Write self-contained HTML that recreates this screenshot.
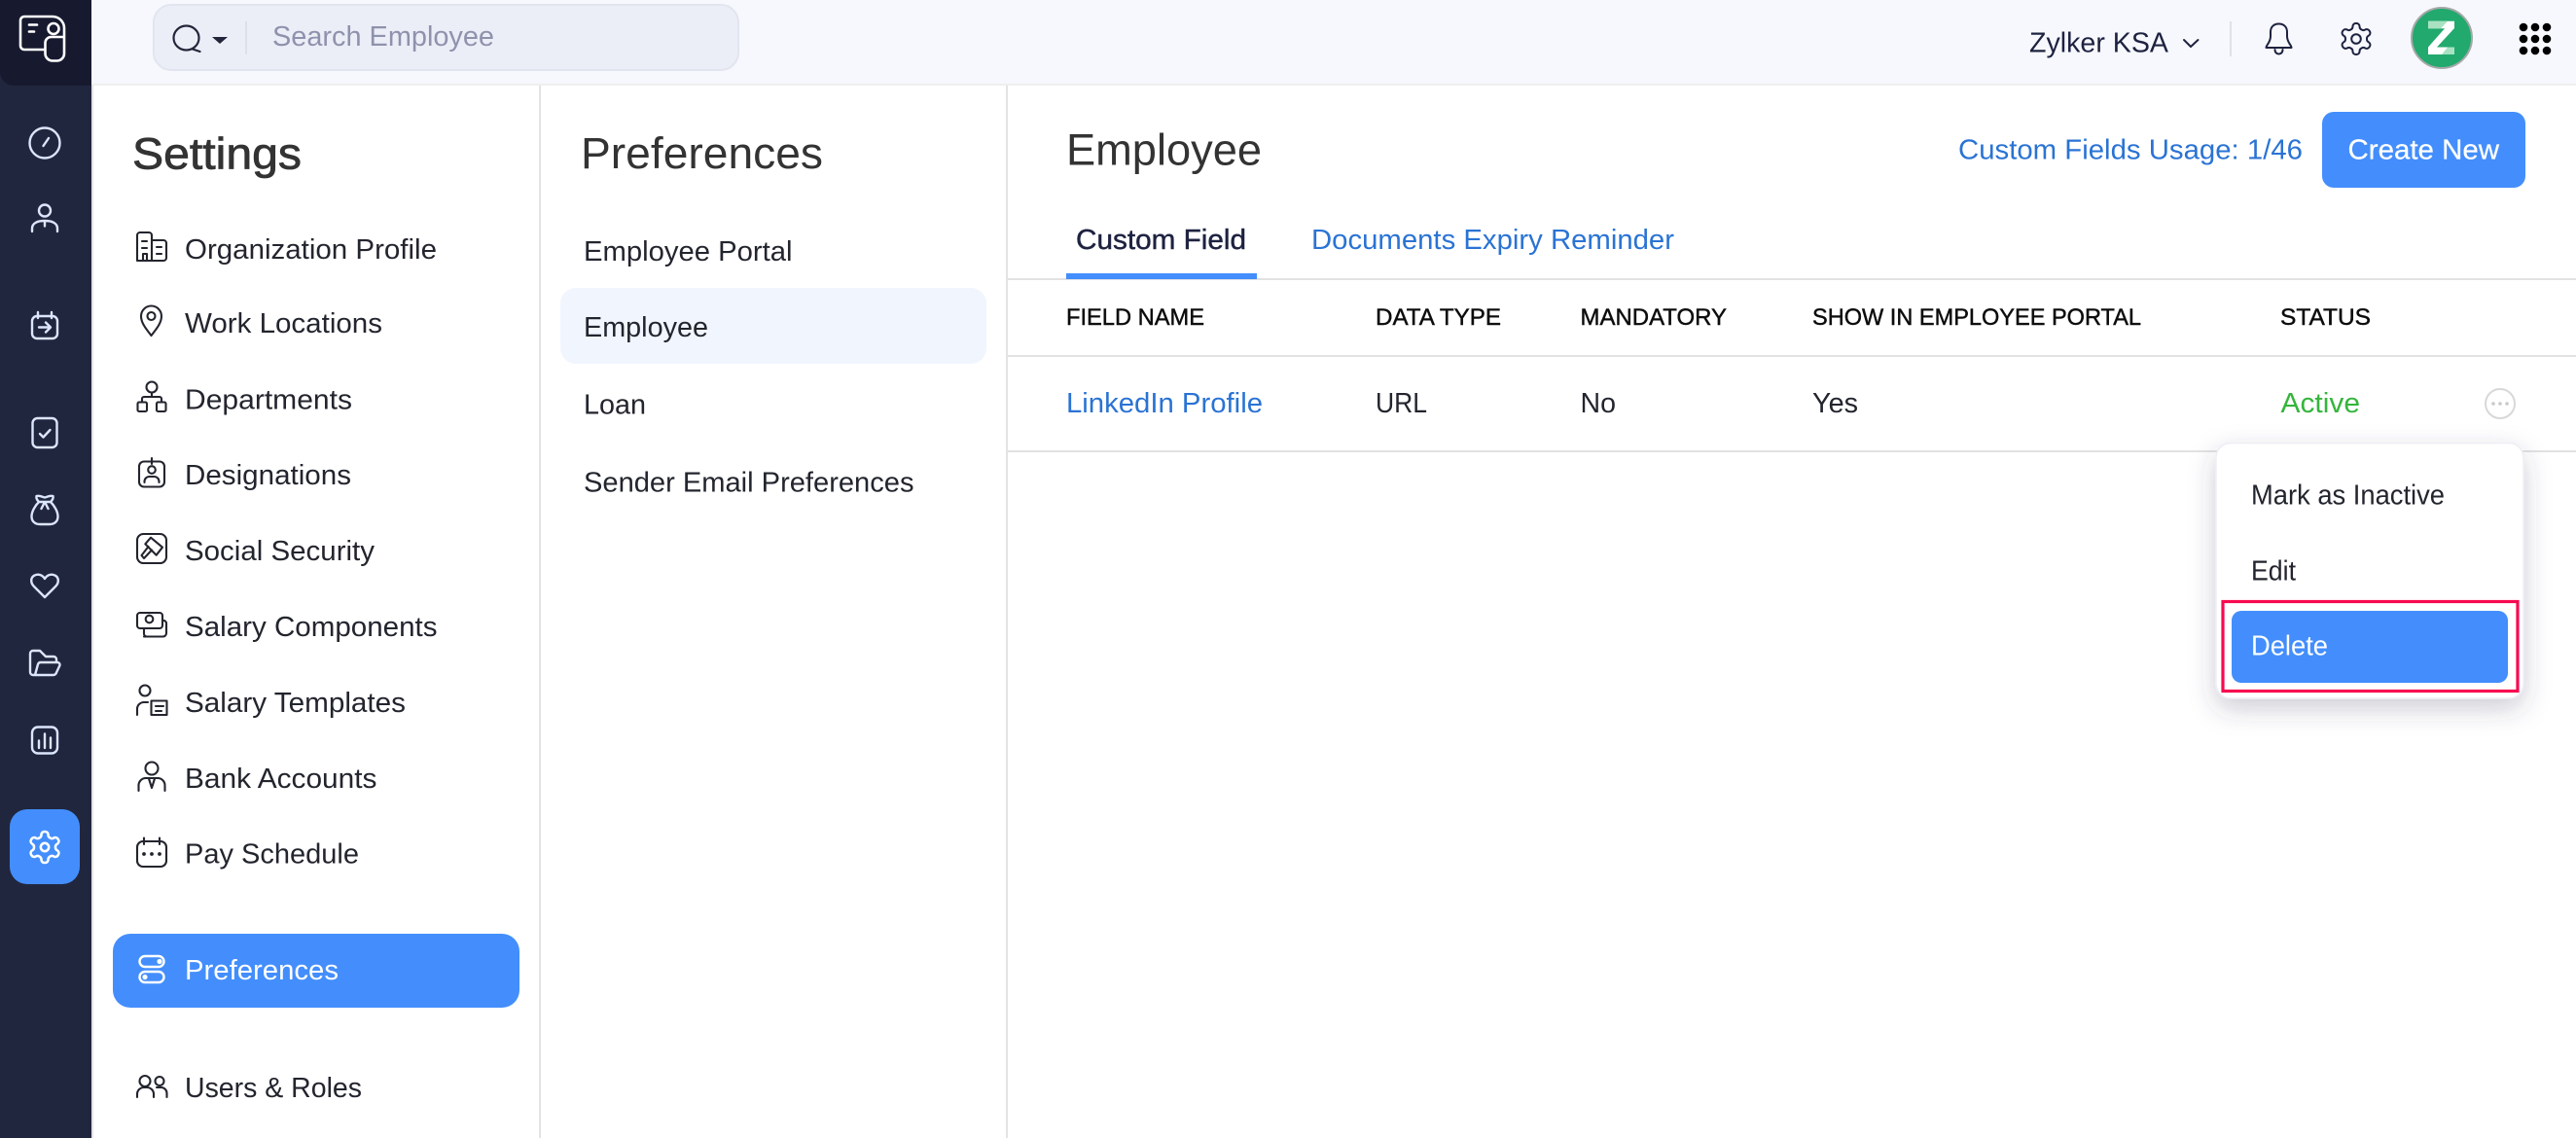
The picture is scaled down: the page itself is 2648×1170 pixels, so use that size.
<!DOCTYPE html>
<html lang="en">
<head>
<meta charset="utf-8">
<title>Settings - Preferences - Employee</title>
<style>
html,body{margin:0;padding:0;background:#fff;width:2648px;height:1170px;overflow:hidden}
svg{display:block}
text{font-family:"Liberation Sans",Arial,sans-serif;font-size:28.5px;fill:#23252e;white-space:pre}
.h{font-size:45px;fill:#333}
.med{stroke-width:.45px;paint-order:stroke}
.hm{stroke:#333;stroke-width:.75px}
.th{font-size:24.5px;fill:#0c0c0c;stroke:#0c0c0c}
.r{fill:none;stroke:#dbe5fb;stroke-width:2.4;stroke-linecap:round;stroke-linejoin:round}
.i{fill:none;stroke:#23252e;stroke-width:2.1;stroke-linecap:round;stroke-linejoin:round}
.wi{fill:none;stroke:#fff;stroke-width:2.4;stroke-linecap:round;stroke-linejoin:round}
</style>
</head>
<body>
<svg xmlns="http://www.w3.org/2000/svg" width="2648" height="1170" viewBox="0 0 2648 1170">
<defs>
<filter id="sh" x="-20%" y="-20%" width="140%" height="150%"><feDropShadow dx="0" dy="10" stdDeviation="13" flood-color="#3a3f5c" flood-opacity=".25"/></filter>
<path id="gear" d="M12.22 2h-.44a2 2 0 0 0-2 2v.18a2 2 0 0 1-1 1.730l-.43.25a2 2 0 0 1-2 0l-.15-.08a2 2 0 0 0-2.730.73l-.22.38a2 2 0 0 0 .73 2.730l.15.1a2 2 0 0 1 1 1.720v.51a2 2 0 0 1-1 1.740l-.15.09a2 2 0 0 0-.73 2.730l.22.38a2 2 0 0 0 2.730.73l.15-.08a2 2 0 0 1 2 0l.43.25a2 2 0 0 1 1 1.730V20a2 2 0 0 0 2 2h.44a2 2 0 0 0 2-2v-.18a2 2 0 0 1 1-1.730l.43-.25a2 2 0 0 1 2 0l.15.08a2 2 0 0 0 2.730-.73l.22-.39a2 2 0 0 0-.73-2.730l-.15-.08a2 2 0 0 1-1-1.740v-.5a2 2 0 0 1 1-1.740l.15-.09a2 2 0 0 0 .73-2.730l-.22-.38a2 2 0 0 0-2.730-.73l-.15.08a2 2 0 0 1-2 0l-.43-.25a2 2 0 0 1-1-1.730V4a2 2 0 0 0-2-2z"/>
</defs>

<!-- page backgrounds -->
<rect width="2648" height="1170" fill="#fff"/>
<rect x="94" width="2554" height="87" fill="#f7f8fd"/>
<rect x="94" y="86" width="2554" height="2" fill="#efefef"/>
<rect width="94" height="1170" fill="#21263f"/>
<path d="M0 0H94V88H14A14 14 0 0 1 0 74Z" fill="#171a2f"/>
<rect x="94" y="88" width="2" height="1082" fill="#e3e3e3"/>
<rect x="554" y="88" width="2" height="1082" fill="#e3e3e3"/>
<rect x="1034" y="88" width="2" height="1082" fill="#e3e3e3"/>

<!-- rail icons -->
<g fill="none" stroke="#fff" stroke-width="2.600" stroke-linecap="round" stroke-linejoin="round">
<path d="M46.500 51H25a4 4 0 0 1-4-4V21a4 4 0 0 1 4-4H54a12 12 0 0 1 12 12V55a7.500 7.500 0 0 1-7.500 7.500H54a7.500 7.500 0 0 1-7.500-7.500V44a6 6 0 0 1 6-6H66"/>
<circle cx="55" cy="29.500" r="5.500"/>
<path d="M30 25.500H38M30 32.500H35"/>
</g>
<g class="r">
<circle cx="46" cy="147" r="15.500"/><path d="M44.500 150L50 142"/>
<circle cx="46" cy="216.500" r="6"/><path d="M33 238V235C33 229 39 227 46 227S59 229 59 235V238M46 227V232.500"/>
<rect x="33" y="325" width="26" height="23" rx="5"/><path d="M39 321V327M53 321V327M40 336.500H51.500M47 331.500L52 336.500L47 341.500"/>
<rect x="33.500" y="430" width="25" height="30" rx="5"/><path d="M41 446L44.500 449.500L51.500 442"/>
<path d="M40 516C36 520 32.500 526 32.500 531C32.500 536 36 539 41 539H51C56 539 59.500 536 59.500 531C59.500 526 56 520 52 516C54 514 55 512 54.500 510C51 509 48.500 511 46 511.500C43.500 511 41 509 37.500 510C37 512 38 514 40 516ZM40 516H52M46 516L42.500 523M46 516L49.500 523"/>
<path d="M46 614L35 603C31 599 31.500 594 35 591.800C39 589.500 43.500 591 46 595C48.500 591 53 589.500 57 591.800C60.500 594 61 599 57 603Z"/>
<path d="M36 694H34A3 3 0 0 1 31 691V672A3 3 0 0 1 34 669H41L47 675H55A3 3 0 0 1 58 678V680M36 694L39 683A3 3 0 0 1 42 681H59A2.500 2.500 0 0 1 61.500 684L58 691.500A3.500 3.500 0 0 1 55 694Z"/>
<rect x="33" y="747.500" width="26" height="27" rx="6"/><path d="M40 761.500V769M46 754.500V769M52 758.500V769"/>
</g>
<rect x="10" y="832" width="72" height="77" rx="18" fill="#438efc"/>
<g transform="translate(26.800 851.800) scale(1.6)" fill="none" stroke="#fff" stroke-width="1.600" stroke-linejoin="round"><use href="#gear"/><circle cx="12" cy="12" r="2.600"/></g>

<!-- top bar -->
<rect x="158" y="5" width="601" height="67" rx="18" fill="#eceef7" stroke="#e2e4ef" stroke-width="2"/>
<g fill="none" stroke="#23263a" stroke-width="2.200" stroke-linecap="round"><ellipse cx="191.500" cy="39" rx="13" ry="12.500"/><path d="M198 50.500L205.500 53"/></g>
<path d="M218 38H234L226 45Z" fill="#23263a"/>
<rect x="252" y="22" width="2" height="34" fill="#dddfeb"/>
<text x="280" y="47" textLength="228" lengthAdjust="spacingAndGlyphs" style="fill:#8f92ad">Search Employee</text>
<text x="2086" y="53.500" textLength="143" lengthAdjust="spacingAndGlyphs" style="fill:#1d2240">Zylker KSA</text>
<path d="M2245 41L2252 48L2259.500 41" fill="none" stroke="#1d2240" stroke-width="2" stroke-linecap="round" stroke-linejoin="round"/>
<rect x="2292" y="22" width="2" height="36" fill="#e0e1e8"/>
<g fill="none" stroke="#1d2240" stroke-width="2" stroke-linecap="round" stroke-linejoin="round">
<path d="M2329.500 49C2329.500 46 2334 44 2334 37V33C2334 27.500 2337.500 24.500 2342.500 24.500S2351 27.500 2351 33V37C2351 44 2355.500 46 2355.500 49Z"/>
<path d="M2338.500 51C2338.500 57 2346.500 57 2346.500 51"/>
</g>
<g transform="translate(2402.800 20.800) scale(1.6)" fill="none" stroke="#1d2240" stroke-width="1.250" stroke-linejoin="round"><use href="#gear"/><circle cx="12" cy="12" r="3"/></g>
<circle cx="2510" cy="39" r="31" fill="#22a96e" stroke="#a5a8a8" stroke-width="2"/>
<path d="M2496 21.700H2523V29L2505 48.500H2523V56H2496V48.500L2513 29.300H2496Z" fill="#fff"/>
<path d="M2496 21.700H2516L2509 29.300H2496Z" fill="#a8e2c2"/>
<path d="M2523 56H2510L2516 48.500H2523Z" fill="#a8e2c2"/>
<g fill="#000"><circle cx="2594" cy="28" r="4.300"/><circle cx="2606" cy="28" r="4.300"/><circle cx="2618" cy="28" r="4.300"/><circle cx="2594" cy="40" r="4.300"/><circle cx="2606" cy="40" r="4.300"/><circle cx="2618" cy="40" r="4.300"/><circle cx="2594" cy="52" r="4.300"/><circle cx="2606" cy="52" r="4.300"/><circle cx="2618" cy="52" r="4.300"/></g>

<!-- settings menu -->
<text class="h med hm" x="136" y="173.500" textLength="174" lengthAdjust="spacingAndGlyphs">Settings</text>
<text x="190" y="266" textLength="259" lengthAdjust="spacingAndGlyphs">Organization Profile</text>
<text x="190" y="342" textLength="203" lengthAdjust="spacingAndGlyphs">Work Locations</text>
<text x="190" y="420.500" textLength="172" lengthAdjust="spacingAndGlyphs">Departments</text>
<text x="190" y="498" textLength="171" lengthAdjust="spacingAndGlyphs">Designations</text>
<text x="190" y="576" textLength="195" lengthAdjust="spacingAndGlyphs">Social Security</text>
<text x="190" y="654" textLength="259.500" lengthAdjust="spacingAndGlyphs">Salary Components</text>
<text x="190" y="732" textLength="227" lengthAdjust="spacingAndGlyphs">Salary Templates</text>
<text x="190" y="810" textLength="197.500" lengthAdjust="spacingAndGlyphs">Bank Accounts</text>
<text x="190" y="887.500" textLength="179" lengthAdjust="spacingAndGlyphs">Pay Schedule</text>
<rect x="116" y="960" width="418" height="76" rx="18" fill="#438efc"/>
<text x="190" y="1007" textLength="158" lengthAdjust="spacingAndGlyphs" style="fill:#fff">Preferences</text>
<text x="190" y="1128" textLength="182" lengthAdjust="spacingAndGlyphs">Users &amp; Roles</text>

<!-- settings icons -->
<g class="i">
<path d="M141 268V242A3 3 0 0 1 144 239H153A3 3 0 0 1 156 242V268ZM156 247H168A3 3 0 0 1 171 250V265A3 3 0 0 1 168 268H141M146 248H151M146 255H151M161 254H166M161 261H166M147 268V261H151V268"/>
<path d="M155.500 345C150 338 145 332 145 325A10.500 10.500 0 0 1 166 325C166 332 161 338 155.500 345Z"/><circle cx="155.500" cy="325" r="4"/>
<circle cx="156" cy="398" r="5.500"/><path d="M156 403.500V408M146 413V410A2 2 0 0 1 148 408H164A2 2 0 0 1 166 410V413"/><rect x="141.500" y="413.500" width="9.500" height="9.500" rx="1.500"/><rect x="161" y="413.500" width="9.500" height="9.500" rx="1.500"/>
<rect x="143" y="474.500" width="26" height="26" rx="5"/><path d="M156 471V477"/><circle cx="156" cy="483" r="3.800"/><path d="M148.500 496V495A5 5 0 0 1 153.500 490H158.500A5 5 0 0 1 163.500 495V496"/>
<rect x="141" y="549" width="30" height="30" rx="6.500"/><path d="M155 552.700L167 562.700L160.700 570.700L149.300 559.300Z M152.500 562L145.500 571L148 574L156 565.500"/>
<rect x="141" y="630" width="26" height="16" rx="3"/><circle cx="153.500" cy="636.500" r="3.800"/><path d="M148 654.500H167.500A3.500 3.500 0 0 0 171 651V641A3 3 0 0 0 167.500 638M148 646V651A3 3 0 0 0 151 654.500"/>
<circle cx="149" cy="710" r="5.500"/><path d="M141 735V729A7 7 0 0 1 148 722H152"/><rect x="155.500" y="720.500" width="16" height="14.500"/><path d="M160 726H168M160 731H166"/>
<circle cx="156" cy="790" r="6.500"/><path d="M142.500 813V808A7.500 7.500 0 0 1 150 800H162A7.500 7.500 0 0 1 169.500 808V813M153 800.500L156 810L159 800.500"/>
<rect x="141" y="865" width="30" height="26" rx="6"/><path d="M148 861.500V868M164 861.500V868"/>
<circle cx="149" cy="1111.500" r="5.500"/><circle cx="164" cy="1111.500" r="4.500"/><path d="M141 1128V1125A7 7 0 0 1 148 1118H151A7 7 0 0 1 158 1125V1128M171.500 1128V1124A6 6 0 0 0 165.500 1118H161"/>
</g>
<g fill="#23252e"><circle cx="148" cy="878" r="1.900"/><circle cx="156" cy="878" r="1.900"/><circle cx="164" cy="878" r="1.900"/></g>
<g class="wi"><rect x="143.500" y="983" width="25" height="11" rx="5.500"/><rect x="143.500" y="999" width="25" height="11" rx="5.500"/></g>
<g fill="#fff"><circle cx="164" cy="988.500" r="2.600"/><circle cx="149" cy="1004.500" r="2.600"/></g>

<!-- preferences list -->
<text class="h" x="597" y="173" textLength="249" lengthAdjust="spacingAndGlyphs">Preferences</text>
<rect x="576" y="296" width="438" height="78" rx="16" fill="#f1f5fe"/>
<text x="600" y="268" textLength="214.500" lengthAdjust="spacingAndGlyphs">Employee Portal</text>
<text x="600" y="346" textLength="128" lengthAdjust="spacingAndGlyphs">Employee</text>
<text x="600" y="425.500" textLength="64" lengthAdjust="spacingAndGlyphs">Loan</text>
<text x="600" y="505.500" textLength="339.500" lengthAdjust="spacingAndGlyphs">Sender Email Preferences</text>

<!-- main -->
<text class="h" x="1096" y="169.500" textLength="201" lengthAdjust="spacingAndGlyphs">Employee</text>
<text x="2013" y="163.500" textLength="354" lengthAdjust="spacingAndGlyphs" style="fill:#2a73d4">Custom Fields Usage: 1/46</text>
<rect x="2387" y="115" width="209" height="78" rx="12" fill="#438efc"/>
<text x="2413.500" y="163.500" textLength="155.500" lengthAdjust="spacingAndGlyphs" style="fill:#fff" stroke="#fff" stroke-width=".25">Create New</text>

<text class="med" x="1106" y="256" textLength="175" lengthAdjust="spacingAndGlyphs" style="fill:#1d2240;stroke:#1d2240">Custom Field</text>
<text x="1348" y="256" textLength="373" lengthAdjust="spacingAndGlyphs" style="fill:#2a73d4">Documents Expiry Reminder</text>
<rect x="1036" y="286" width="1612" height="2" fill="#e2e2e2"/>
<rect x="1096" y="281" width="196" height="6" fill="#438efc"/>

<text class="th med" x="1096" y="334" textLength="142" lengthAdjust="spacingAndGlyphs">FIELD NAME</text>
<text class="th med" x="1414" y="334" textLength="129" lengthAdjust="spacingAndGlyphs">DATA TYPE</text>
<text class="th med" x="1624.500" y="334" textLength="150.500" lengthAdjust="spacingAndGlyphs">MANDATORY</text>
<text class="th med" x="1863" y="334" textLength="338" lengthAdjust="spacingAndGlyphs">SHOW IN EMPLOYEE PORTAL</text>
<text class="th med" x="2344" y="334" textLength="93" lengthAdjust="spacingAndGlyphs">STATUS</text>
<rect x="1036" y="365" width="1612" height="2" fill="#e2e2e2"/>

<text x="1096" y="424" textLength="202" lengthAdjust="spacingAndGlyphs" style="fill:#2a73d4">LinkedIn Profile</text>
<text x="1414" y="424" textLength="53" lengthAdjust="spacingAndGlyphs">URL</text>
<text x="1624.500" y="424" textLength="36.500" lengthAdjust="spacingAndGlyphs">No</text>
<text x="1863" y="424" textLength="47" lengthAdjust="spacingAndGlyphs">Yes</text>
<text x="2344.500" y="424" textLength="81.500" lengthAdjust="spacingAndGlyphs" style="fill:#35b53c">Active</text>
<circle cx="2570" cy="415" r="15" fill="#fff" stroke="#d8d8d8" stroke-width="2"/>
<g fill="#c9c9c9"><circle cx="2563" cy="415" r="1.800"/><circle cx="2570" cy="415" r="1.800"/><circle cx="2577" cy="415" r="1.800"/></g>
<rect x="1036" y="463" width="1612" height="2" fill="#e2e2e2"/>

<!-- dropdown -->
<rect x="2278" y="455.500" width="316" height="262.500" rx="15" fill="#fff" stroke="#edeef5" stroke-width="1.500" filter="url(#sh)"/>
<text x="2314" y="518.500" textLength="199" lengthAdjust="spacingAndGlyphs">Mark as Inactive</text>
<text x="2314" y="596.500" textLength="46" lengthAdjust="spacingAndGlyphs">Edit</text>
<rect x="2294" y="628" width="284" height="74" rx="10" fill="#438efc"/>
<text x="2314" y="673.500" textLength="79" lengthAdjust="spacingAndGlyphs" style="fill:#fff">Delete</text>
<rect x="2285" y="618.500" width="303" height="92" fill="none" stroke="#f7094f" stroke-width="3.200"/>
</svg>
</body>
</html>
